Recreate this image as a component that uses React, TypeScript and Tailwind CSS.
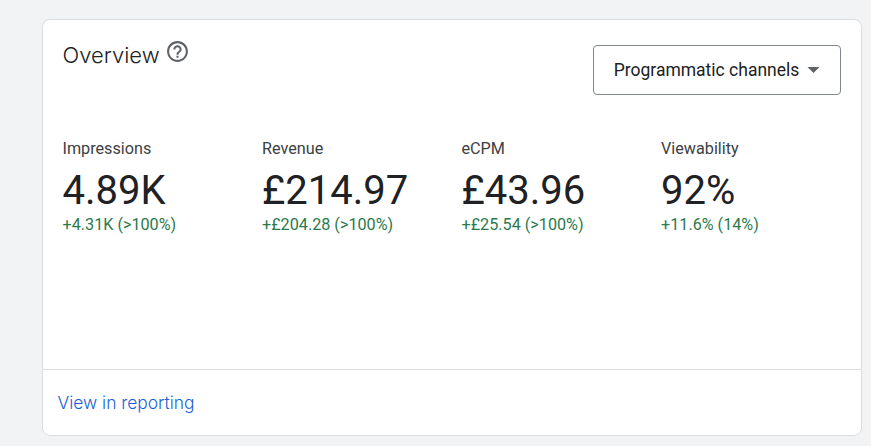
const metrics = [
  { label: "Impressions", value: "4.89K", change: "+4.31K (>100%)" },
  { label: "Revenue", value: "£214.97", change: "+£204.28 (>100%)" },
  { label: "eCPM", value: "£43.96", change: "+£25.54 (>100%)" },
  { label: "Viewability", value: "92%", change: "+11.6% (14%)" },
];

export default function App() {
  return (
    <div className="h-[446px] w-[871px] overflow-hidden bg-[#f1f3f4] pl-[42px] pr-[9px] pt-[19px] font-['Roboto',sans-serif]">
      {/* Card */}
      <div className="flex h-[417px] flex-col rounded-[8px] border border-[#dadce0] bg-white">
        {/* Header */}
        <div className="flex items-start justify-between pl-[20px] pr-[20px] pt-[25px]">
          <div className="flex items-start gap-[5.5px]">
            <h2 className="-ml-[0.5px] -mt-[1px] font-['Inter',sans-serif] text-[22px] font-light leading-[22px] text-[#202124]">
              Overview
            </h2>
            <svg width="25" height="25" viewBox="0 0 24 24" className="-mt-[6px] fill-[#5f6368]">
              <path d="M11 18h2v-2h-2v2zm1-16C6.48 2 2 6.48 2 12s4.48 10 10 10 10-4.48 10-10S17.52 2 12 2zm0 18c-4.41 0-8-3.59-8-8s3.59-8 8-8 8 3.59 8 8-3.59 8-8 8zm0-14c-2.21 0-4 1.79-4 4h2c0-1.1.9-2 2-2s2 .9 2 2c0 2-3 1.75-3 5h2c0-2.25 3-2.5 3-5 0-2.21-1.79-4-4-4z" />
            </svg>
          </div>
          <button className="flex h-[50px] w-[248px] items-center justify-center gap-[8px] rounded-[4px] border border-[#80868b] bg-white text-[17.5px] text-[#202124]">
            Programmatic channels
            <svg width="13" height="6" viewBox="0 0 14 7" className="fill-[#5f6368]">
              <path d="M0 0h14L7 7z" />
            </svg>
          </button>
        </div>

        {/* Metrics */}
        <div className="mt-[44px] flex flex-1 pl-[19.5px]">
          {metrics.map((m) => (
            <div key={m.label} className="w-[199.5px]">
              <div className="text-[16.2px] leading-[20px] text-[#3c4043]">{m.label}</div>
              <div className="mt-[8px] text-[40px] leading-[48px] text-[#202124]">{m.value}</div>
              <div className="text-[16.2px] leading-[20px] text-[#2b7a4b]">{m.change}</div>
            </div>
          ))}
        </div>

        {/* Footer */}
        <div className="flex h-[66px] items-center border-t border-[#dadce0] pl-[14.5px] pt-[1px]">
          <a className="font-['Inter',sans-serif] text-[17.4px] font-light text-[#1a5fd8]">View in reporting</a>
        </div>
      </div>
    </div>
  );
}
